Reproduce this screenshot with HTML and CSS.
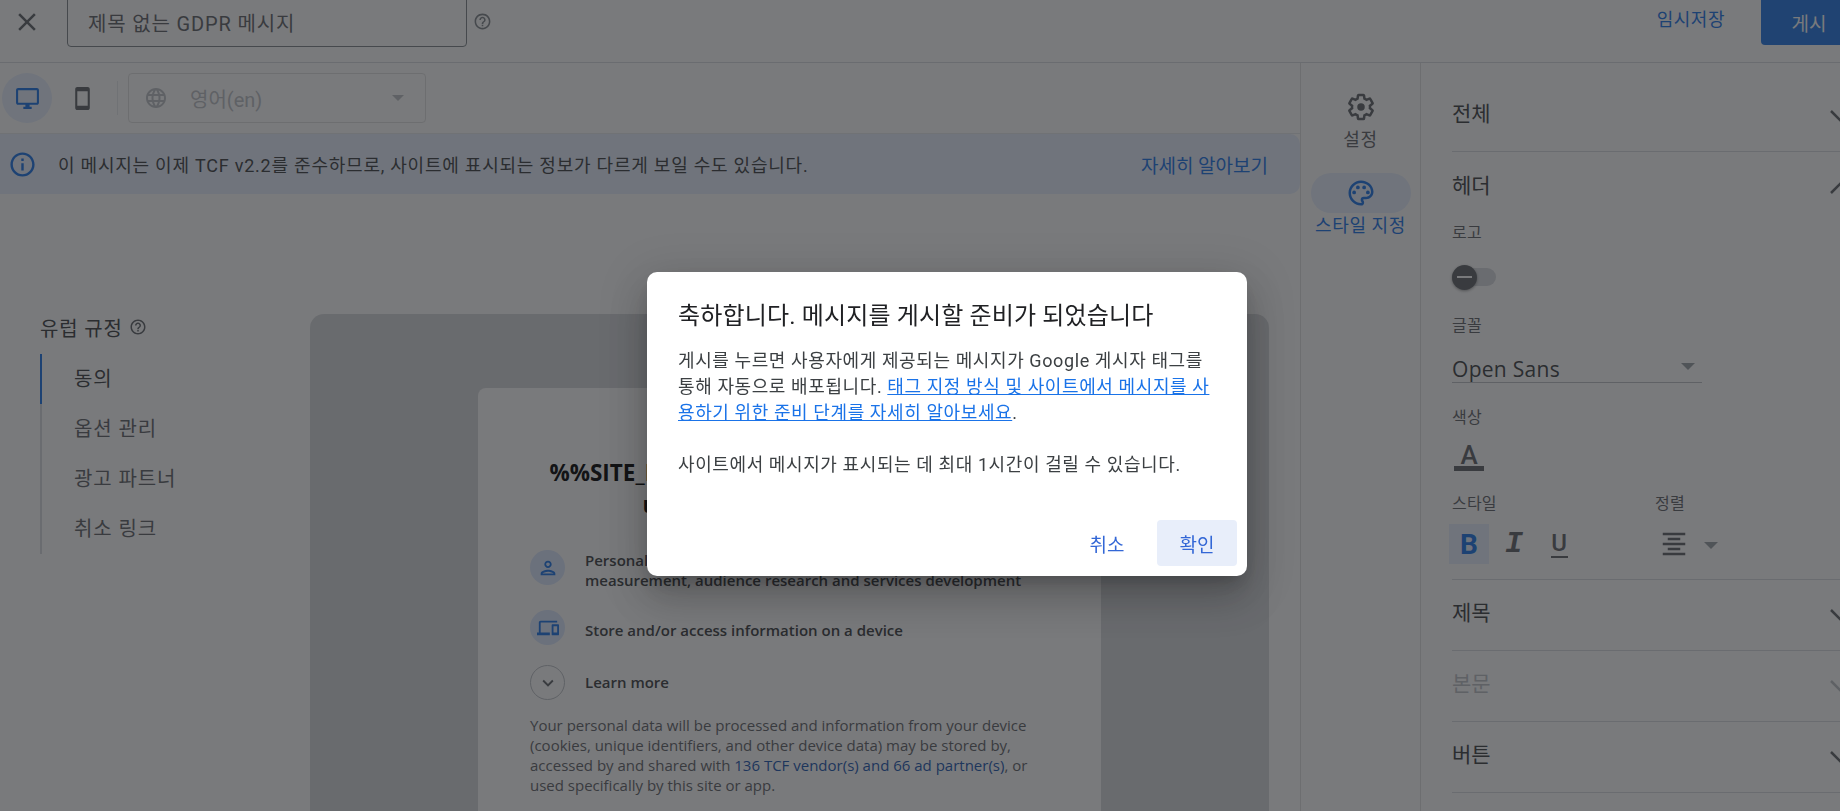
FILE: index.html
```html
<!DOCTYPE html>
<html lang="ko">
<head>
  <meta charset="UTF-8">
  <title>제목 없는 GDPR 메시지</title>
  <link rel="stylesheet" href="styles.css">
</head>
<body>
  <header class="barra">
    <svg class="ico-cerrar" viewBox="0 0 24 24"><path d="M19 6.41L17.59 5 12 10.59 6.41 5 5 6.41 10.59 12 5 17.59 6.41 19 12 13.41 17.59 19 19 17.59 13.41 12z"/></svg>
    <div class="titulo-input">제목 없는 GDPR 메시지</div>
    <svg class="ico-ayuda" viewBox="0 0 24 24"><path d="M11 18h2v-2h-2v2zm1-16C6.48 2 2 6.48 2 12s4.48 10 10 10 10-4.48 10-10S17.52 2 12 2zm0 18c-4.41 0-8-3.59-8-8s3.59-8 8-8 8 3.59 8 8-3.59 8-8 8zm0-14c-2.21 0-4 1.79-4 4h2c0-1.1.9-2 2-2s2 .9 2 2c0 2-3 1.75-3 5h2c0-2.25 3-2.5 3-5 0-2.21-1.79-4-4-4z"/></svg>
    <span class="espacio"></span>
    <a class="borrador">임시저장</a>
    <button class="publicar">게시</button>
  </header>

  <div class="cuerpo">
    <main class="editor">
      <div class="herramientas">
        <span class="disp activo">
          <svg viewBox="0 0 24 24"><path d="M21 2H3c-1.1 0-2 .9-2 2v12c0 1.1.9 2 2 2h7v2H8v2h8v-2h-2v-2h7c1.1 0 2-.9 2-2V4c0-1.1-.9-2-2-2zm0 14H3V4h18v12z"/></svg>
        </span>
        <span class="disp">
          <svg viewBox="0 0 24 24"><path d="M17 1.01L7 1c-1.1 0-2 .9-2 2v18c0 1.1.9 2 2 2h10c1.1 0 2-.9 2-2V3c0-1.1-.9-1.99-2-1.99zM17 19H7V5h10v14z"/></svg>
        </span>
        <span class="separador"></span>
        <div class="idioma">
          <svg class="ico-globo" viewBox="0 0 24 24"><path d="M11.99 2C6.47 2 2 6.48 2 12s4.47 10 9.99 10C17.52 22 22 17.52 22 12S17.52 2 11.99 2zm6.93 6h-2.95c-.32-1.25-.78-2.45-1.38-3.56 1.84.63 3.37 1.91 4.33 3.56zM12 4.04c.83 1.2 1.48 2.53 1.91 3.96h-3.82c.43-1.43 1.08-2.76 1.91-3.96zM4.26 14C4.1 13.36 4 12.69 4 12s.1-1.36.26-2h3.38c-.08.66-.14 1.32-.14 2 0 .68.06 1.34.14 2H4.26zm.82 2h2.95c.32 1.25.78 2.45 1.38 3.56-1.84-.63-3.37-1.9-4.33-3.56zm2.95-8H5.08c.96-1.66 2.49-2.93 4.33-3.56C8.81 5.55 8.35 6.75 8.03 8zM12 19.96c-.83-1.2-1.48-2.53-1.91-3.96h3.82c-.43 1.43-1.08 2.76-1.91 3.96zM14.34 14H9.66c-.09-.66-.16-1.32-.16-2 0-.68.07-1.35.16-2h4.68c.09.65.16 1.32.16 2 0 .68-.07 1.34-.16 2zm.25 5.56c.6-1.11 1.06-2.31 1.38-3.56h2.95c-.96 1.65-2.49 2.93-4.33 3.56zM16.36 14c.08-.66.14-1.32.14-2 0-.68-.06-1.34-.14-2h3.38c.16.64.26 1.31.26 2s-.1 1.36-.26 2h-3.38z"/></svg>
          <span class="idioma-texto">영어(en)</span>
          <span class="flecha flecha-idioma"></span>
        </div>
      </div>

      <div class="aviso">
        <svg class="ico-info" viewBox="0 0 24 24"><path d="M11 7h2v2h-2zm0 4h2v6h-2zm1-9C6.48 2 2 6.48 2 12s4.48 10 10 10 10-4.48 10-10S17.52 2 12 2zm0 18c-4.41 0-8-3.59-8-8s3.59-8 8-8 8 3.59 8 8-3.59 8-8 8z"/></svg>
        <span class="aviso-texto">이 메시지는 이제 TCF v2.2를 준수하므로, 사이트에 표시되는 정보가 다르게 보일 수도 있습니다.</span>
        <a class="aviso-link">자세히 알아보기</a>
      </div>

      <div class="contenido">
        <nav class="lateral">
          <div class="lateral-titulo">유럽 규정
            <svg viewBox="0 0 24 24"><path d="M11 18h2v-2h-2v2zm1-16C6.48 2 2 6.48 2 12s4.48 10 10 10 10-4.48 10-10S17.52 2 12 2zm0 18c-4.41 0-8-3.59-8-8s3.59-8 8-8 8 3.59 8 8-3.59 8-8 8zm0-14c-2.21 0-4 1.79-4 4h2c0-1.1.9-2 2-2s2 .9 2 2c0 2-3 1.75-3 5h2c0-2.25 3-2.5 3-5 0-2.21-1.79-4-4-4z"/></svg>
          </div>
          <ul class="pasos">
            <li class="actual">동의</li>
            <li>옵션 관리</li>
            <li>광고 파트너</li>
            <li>취소 링크</li>
          </ul>
        </nav>

        <section class="vista">
          <div class="tarjeta">
            <h1>%%SITE_NAME%% asks for your consent to<br>use your personal data to:</h1>
            <div class="fila fila-doble">
              <span class="burbuja">
                <svg viewBox="0 0 24 24"><path d="M12 6c1.1 0 2 .9 2 2s-.9 2-2 2-2-.9-2-2 .9-2 2-2m0 10c2.7 0 5.8 1.29 6 2H6c.23-.72 3.31-2 6-2m0-12C9.79 4 8 5.79 8 8s1.79 4 4 4 4-1.79 4-4-1.79-4-4-4zm0 10c-2.67 0-8 1.34-8 4v2h16v-2c0-2.66-5.33-4-8-4z"/></svg>
              </span>
              <p>Personalised advertising and content, advertising and content measurement, audience research and services development</p>
            </div>
            <div class="fila fila-baja">
              <span class="burbuja">
                <svg viewBox="0 0 24 24"><path d="M4 6h18V4H4c-1.1 0-2 .9-2 2v11H0v3h14v-3H4V6zm19 2h-6c-.55 0-1 .45-1 1v10c0 .55.45 1 1 1h6c.55 0 1-.45 1-1V9c0-.55-.45-1-1-1zm-1 9h-4v-7h4v7z"/></svg>
              </span>
              <p>Store and/or access information on a device</p>
            </div>
            <div class="fila fila-centro">
              <span class="burbuja burbuja-linea">
                <svg viewBox="0 0 24 24"><path d="M7.41 8.59L12 13.17l4.59-4.58L18 10l-6 6-6-6z"/></svg>
              </span>
              <p>Learn more</p>
            </div>
            <p class="legal">Your personal data will be processed and information from your device (cookies, unique identifiers, and other device data) may be stored by, accessed by and shared with <a>136 TCF vendor(s) and 66 ad partner(s)</a>, or used specifically by this site or app.</p>
          </div>
        </section>
      </div>
    </main>

    <aside class="riel">
      <div class="riel-item">
        <span class="riel-ico">
          <svg viewBox="0 0 24 24"><path class="engranaje" d="M19.14 12.94c.04-.3.06-.61.06-.94 0-.32-.02-.64-.07-.94l2.03-1.58c.18-.14.23-.41.12-.61l-1.92-3.32c-.12-.22-.37-.29-.59-.22l-2.39.96c-.5-.38-1.03-.7-1.62-.94l-.36-2.54c-.04-.24-.24-.41-.48-.41h-3.84c-.24 0-.43.17-.47.41l-.36 2.54c-.59.24-1.13.57-1.62.94l-2.39-.96c-.22-.08-.47 0-.59.22L2.74 8.87c-.12.21-.08.47.12.61l2.03 1.58c-.05.3-.09.63-.09.94s.02.64.07.94l-2.03 1.58c-.18.14-.23.41-.12.61l1.92 3.32c.12.22.37.29.59.22l2.39-.96c.5.38 1.03.7 1.62.94l.36 2.54c.05.24.24.41.48.41h3.84c.24 0 .44-.17.47-.41l.36-2.54c.59-.24 1.13-.56 1.62-.94l2.39.96c.22.08.47 0 .59-.22l1.92-3.32c.12-.22.07-.47-.12-.61l-2.01-1.58z"/><circle cx="12" cy="12" r="3"/></svg>
        </span>
        <span>설정</span>
      </div>
      <div class="riel-item riel-activo">
        <span class="riel-ico">
          <svg viewBox="0 0 24 24"><path d="M12 22C6.49 22 2 17.51 2 12S6.49 2 12 2s10 4.04 10 9c0 3.31-2.69 6-6 6h-1.77c-.28 0-.5.22-.5.5 0 .12.05.23.13.33.41.47.64 1.06.64 1.67A2.5 2.5 0 0 1 12 22zm0-18c-4.41 0-8 3.59-8 8s3.59 8 8 8c.28 0 .5-.22.5-.5a.54.54 0 0 0-.14-.35c-.41-.46-.63-1.05-.63-1.65a2.5 2.5 0 0 1 2.5-2.5H16c2.21 0 4-1.79 4-4 0-3.86-3.59-7-8-7z"/><circle cx="6.5" cy="11.5" r="1.5"/><circle cx="9.5" cy="7.5" r="1.5"/><circle cx="14.5" cy="7.5" r="1.5"/><circle cx="17.5" cy="11.5" r="1.5"/></svg>
        </span>
        <span>스타일 지정</span>
      </div>
    </aside>

    <aside class="panel">
      <div class="seccion seccion-primera"><span>전체</span><svg class="chevron" viewBox="0 0 24 24"><path d="M2 7l10 10L22 7"/></svg></div>

      <div class="bloque">
        <div class="seccion seccion-abierta"><span>헤더</span><svg class="chevron" viewBox="0 0 24 24"><path d="M2 17L12 7l10 10"/></svg></div>
        <div class="etiqueta">로고</div>
        <div class="interruptor"><span class="pulgar"></span></div>
        <div class="etiqueta etiqueta-fuente">글꼴</div>
        <div class="fuente"><span>Open Sans</span><span class="flecha flecha-fuente"></span></div>
        <div class="etiqueta etiqueta-color">색상</div>
        <div class="color-a">A</div>
        <div class="estilos">
          <div class="col-estilo">
            <div class="etiqueta">스타일</div>
            <div class="botones">
              <span class="btn-b">B</span>
              <span class="btn-i">I</span>
              <span class="btn-u"><span>U</span></span>
            </div>
          </div>
          <div>
            <div class="etiqueta">정렬</div>
            <div class="botones alinear">
              <svg viewBox="0 0 24 24"><path d="M7 15v2h10v-2H7zm-4 6h18v-2H3v2zm0-8h18v-2H3v2zm4-6v2h10V7H7zM3 3v2h18V3H3z"/></svg>
              <span class="flecha"></span>
            </div>
          </div>
        </div>
      </div>

      <div class="seccion seccion-linea"><span>제목</span><svg class="chevron" viewBox="0 0 24 24"><path d="M2 7l10 10L22 7"/></svg></div>
      <div class="seccion seccion-linea apagada"><span>본문</span><svg class="chevron" viewBox="0 0 24 24"><path d="M2 7l10 10L22 7"/></svg></div>
      <div class="seccion seccion-linea"><span>버튼</span><svg class="chevron" viewBox="0 0 24 24"><path d="M2 7l10 10L22 7"/></svg></div>
    </aside>
  </div>

  <div class="velo"></div>

  <div class="dialogo">
    <h2>축하합니다. 메시지를 게시할 준비가 되었습니다</h2>
    <p>게시를 누르면 사용자에게 제공되는 메시지가 Google 게시자 태그를 통해 자동으로 배포됩니다. <a>태그 지정 방식 및 사이트에서 메시지를 사용하기 위한 준비 단계를 자세히 알아보세요</a>.</p>
    <p class="dialogo-nota">사이트에서 메시지가 표시되는 데 최대 1시간이 걸릴 수 있습니다.</p>
    <div class="acciones">
      <button class="btn-cancelar">취소</button>
      <button class="btn-ok">확인</button>
    </div>
  </div>
</body>
</html>
```

FILE: styles.css
```css
html, body {
  height: 100%;
  margin: 0;
}
body {
  overflow: hidden;
  background-color: #fff;
  color: #202124;
  font-family: Roboto, "Noto Sans CJK KR", sans-serif;
}
svg {
  display: block;
  fill: currentColor;
}
.barra {
  display: flex;
  align-items: flex-start;
  height: 62px;
  border-bottom: 1px solid #dadce0;
}
.ico-cerrar {
  width: 30px;
  height: 30px;
  margin: 7px 0 0 12px;
  color: #5f6368;
}
.titulo-input {
  box-sizing: border-box;
  width: 400px;
  height: 57px;
  margin: -10px 0 0 25px;
  padding: 20px 0 0 20px;
  border: 1px solid #80868b;
  border-radius: 4px;
  font-size: 20px;
  letter-spacing: 0.85px;
  line-height: 26px;
  color: #5f6368;
}
.ico-ayuda {
  width: 19px;
  height: 19px;
  margin: 12px 0 0 6px;
  color: #80868b;
}
.espacio {
  flex: 1;
}
.borrador {
  margin: 8px 36px 0 0;
  font-size: 18px;
  letter-spacing: 0.5px;
  line-height: 24px;
  color: #1a73e8;
}
.publicar {
  width: 96px;
  height: 56px;
  margin: -11px -17px 0 0;
  padding: 11px 0 0;
  border: none;
  border-radius: 4px;
  background-color: #2277e6;
  color: #fff;
  font: 19px Roboto, "Noto Sans CJK KR", sans-serif;
}
.cuerpo {
  display: flex;
  height: 748px;
  overflow: hidden;
}
.editor {
  width: 1300px;
  flex: none;
}
.herramientas {
  display: flex;
  align-items: center;
  height: 70px;
  padding-left: 2px;
  border-bottom: 1px solid #e8eaed;
}
.disp {
  display: flex;
  align-items: center;
  justify-content: center;
  width: 50px;
  height: 50px;
  margin-right: 5px;
  border-radius: 50%;
  color: #5f6368;
}
.disp svg {
  width: 25px;
  height: 25px;
}
.disp.activo {
  background-color: #e8f0fe;
  color: #1a73e8;
}
.separador {
  width: 1px;
  height: 34px;
  margin: 0 10px 0 5px;
  background-color: #e8eaed;
}
.idioma {
  display: flex;
  align-items: center;
  box-sizing: border-box;
  width: 298px;
  height: 50px;
  padding-left: 15px;
  border: 1px solid #e0e0e0;
  border-radius: 4px;
  color: #bdc1c6;
}
.ico-globo {
  width: 24px;
  height: 24px;
}
.idioma-texto {
  margin-left: 22px;
  font-size: 20px;
  color: #bdc1c6;
}
.flecha {
  width: 0;
  height: 0;
  border-left: 6px solid transparent;
  border-right: 6px solid transparent;
  border-top: 6px solid #9aa0a6;
}
.flecha-idioma {
  margin-left: auto;
  margin-right: 21px;
  border-top-color: #bdc1c6;
}
.aviso {
  display: flex;
  align-items: center;
  height: 60px;
  padding: 0 32px 0 8px;
  background-color: #e8f0fe;
  border-radius: 0 10px 10px 0;
}
.ico-info {
  width: 29px;
  height: 29px;
  color: #1a73e8;
}
.aviso-texto {
  margin-left: 21px;
  font-size: 18px;
  letter-spacing: 0.77px;
  color: #3c4043;
}
.aviso-link {
  margin-left: auto;
  font-size: 19px;
  color: #1a73e8;
}
.contenido {
  display: flex;
  padding: 120px 0 0 40px;
}
.lateral {
  width: 270px;
  flex: none;
}
.lateral-titulo {
  display: flex;
  align-items: center;
  gap: 6px;
  height: 26px;
  font-size: 20px;
  letter-spacing: 0.85px;
  color: #3c4043;
}
.lateral-titulo svg {
  width: 18px;
  height: 18px;
  color: #5f6368;
}
.pasos {
  margin: 14px 0 0;
  padding: 0;
  list-style: none;
  border-left: 2px solid #dadce0;
}
.pasos li {
  height: 50px;
  margin-left: -2px;
  padding-left: 32px;
  border-left: 2px solid transparent;
  font-size: 20px;
  letter-spacing: 0.9px;
  line-height: 50px;
  color: #5f6368;
}
.pasos li.actual {
  border-left-color: #1a73e8;
  color: #3c4043;
}
.vista {
  box-sizing: border-box;
  width: 959px;
  height: 497px;
  padding-top: 74px;
  overflow: hidden;
  border-radius: 14px 14px 0 0;
  background-color: #d8dadd;
}
.tarjeta {
  box-sizing: border-box;
  width: 623px;
  height: 423px;
  margin: 0 auto;
  padding: 69px 52px 0;
  border-radius: 8px 8px 0 0;
  background-color: #fff;
  font-family: "Open Sans", sans-serif;
}
.tarjeta h1 {
  margin: 0 0 29px;
  font-size: 22.5px;
  line-height: 32px;
  font-weight: 700;
  text-align: center;
  color: #000;
}
.fila {
  display: flex;
  margin-bottom: 20px;
}
.fila p {
  margin: 0 0 0 20px;
  font-size: 15px;
  line-height: 20px;
  font-weight: 600;
  color: #3c4043;
}
.fila-doble {
  height: 40px;
}
.fila-baja p {
  padding-top: 10px;
}
.fila-centro {
  align-items: center;
  margin-bottom: 15px;
}
.fila-centro p {
  margin-bottom: 2px;
}
.burbuja {
  display: flex;
  align-items: center;
  justify-content: center;
  box-sizing: border-box;
  width: 35px;
  height: 35px;
  flex: none;
  border-radius: 50%;
  background-color: #dbe8ff;
  color: #1a73e8;
}
.burbuja svg {
  width: 22px;
  height: 22px;
}
.burbuja-linea {
  background-color: transparent;
  border: 1px solid #bdc1c6;
  color: #5f6368;
}
.legal {
  margin: 0;
  font-size: 15px;
  line-height: 20px;
  color: #5f6368;
}
.legal a {
  color: #1a56b0;
}
.riel {
  box-sizing: border-box;
  width: 121px;
  flex: none;
  padding-top: 24px;
  border-left: 1px solid #e0e0e0;
  border-right: 1px solid #e0e0e0;
  text-align: center;
  color: #5f6368;
}
.riel-item {
  display: flex;
  flex-direction: column;
  align-items: center;
  margin-bottom: 21px;
  font-size: 18px;
  letter-spacing: 0.6px;
  line-height: 24px;
}
.riel-ico {
  display: flex;
  align-items: center;
  justify-content: center;
  width: 100px;
  height: 40px;
  margin-bottom: 1px;
  border-radius: 20px;
}
.riel-ico svg {
  width: 30px;
  height: 30px;
}
.engranaje {
  fill: none;
  stroke: currentColor;
  stroke-width: 2;
}
.riel-activo {
  color: #1a73e8;
}
.riel-activo .riel-ico {
  background-color: #e8f0fe;
}
.panel {
  flex: none;
  box-sizing: border-box;
  width: 432px;
  padding-left: 31px;
}
.seccion {
  display: flex;
  align-items: flex-start;
  justify-content: space-between;
  box-sizing: border-box;
  height: 71px;
  padding-top: 19px;
  font-size: 21px;
  line-height: 28px;
  color: #3c4043;
  border-bottom: 1px solid #dadce0;
}
.seccion-primera {
  margin-top: 18px;
}
.seccion-abierta {
  height: 67px;
  padding-top: 20px;
  border-bottom: none;
}
.chevron {
  width: 24px;
  height: 24px;
  margin-top: 4px;
  flex: none;
  fill: none;
  stroke: currentColor;
  stroke-width: 2.5;
  color: #5f6368;
}
.apagada, .apagada .chevron {
  color: #bdc1c6;
}
.bloque {
  padding-bottom: 15px;
  border-bottom: 1px solid #dadce0;
}
.etiqueta {
  height: 28px;
  font-size: 16px;
  letter-spacing: 0.2px;
  line-height: 28px;
  color: #5f6368;
}
.interruptor {
  position: relative;
  width: 44px;
  height: 18px;
  margin: 21px 0 26px;
  border-radius: 9px;
  background-color: #dadce0;
}
.pulgar {
  position: absolute;
  top: -3.5px;
  left: 0;
  width: 25px;
  height: 25px;
  border-radius: 50%;
  background-color: #5f6368;
  box-shadow: 0 1px 3px rgba(0,0,0,0.4);
}
.pulgar::after {
  content: "";
  position: absolute;
  top: 11px;
  left: 5px;
  width: 15px;
  height: 2px;
  background-color: #fff;
}
.fuente {
  display: flex;
  align-items: center;
  justify-content: space-between;
  box-sizing: border-box;
  width: 250px;
  height: 43px;
  padding: 16px 7px 0 0;
  border-bottom: 1px solid #bdc1c6;
  font-family: "Open Sans", sans-serif;
  font-size: 21px;
  letter-spacing: 0.3px;
  color: #3c4043;
}
.flecha-fuente {
  margin-top: -6px;
  border-left-width: 7px;
  border-right-width: 7px;
  border-top-width: 7px;
}
.etiqueta-color {
  margin-top: 21px;
}
.color-a {
  box-sizing: border-box;
  width: 30px;
  height: 27px;
  margin: 12px 0 19px 2px;
  border-bottom: 5px solid #5f6368;
  font-size: 26px;
  font-weight: 500;
  line-height: 22px;
  text-align: center;
  color: #5f6368;
}
.estilos {
  display: flex;
}
.col-estilo {
  width: 203px;
}
.botones {
  display: flex;
  align-items: center;
  height: 40px;
  margin-top: 6px;
  color: #5f6368;
}
.btn-b, .btn-i, .btn-u {
  display: flex;
  align-items: center;
  justify-content: center;
  width: 40px;
  height: 40px;
  font-size: 28px;
}
.btn-b {
  margin-left: -3px;
  background-color: #e8f0fe;
  color: #1a73e8;
  font-weight: 700;
}
.btn-i {
  width: 50px;
  font-family: "Liberation Mono", monospace;
  font-size: 30px;
  font-weight: 700;
  font-style: italic;
}
.btn-u span {
  display: block;
  width: 17px;
  border-bottom: 2px solid #5f6368;
  font-size: 24px;
  line-height: 25px;
  font-weight: 500;
  text-align: center;
}
.alinear svg {
  width: 30px;
  height: 30px;
  margin-left: 4px;
}
.alinear .flecha {
  margin: 3px 0 0 15px;
  border-left-width: 7px;
  border-right-width: 7px;
  border-top-width: 7px;
}
.velo {
  position: fixed;
  top: 0;
  left: 0;
  width: 100%;
  height: 100%;
  background-color: rgba(32, 33, 36, 0.6);
}
.dialogo {
  position: fixed;
  top: 272px;
  left: 647px;
  box-sizing: border-box;
  width: 600px;
  height: 304px;
  padding: 29px 31px 0;
  border-radius: 10px;
  background-color: #fff;
  box-shadow: 0 11px 15px -7px rgba(0,0,0,0.2), 0 24px 38px 3px rgba(0,0,0,0.14), 0 9px 46px 8px rgba(0,0,0,0.12);
}
.dialogo h2 {
  margin: 0 0 17px;
  font-size: 24px;
  letter-spacing: 0.15px;
  line-height: 30px;
  font-weight: 400;
  color: #202124;
}
.dialogo p {
  margin: 0;
  font-size: 18px;
  letter-spacing: 0.6px;
  line-height: 26px;
  color: #3c4043;
}
.dialogo a {
  color: #1a73e8;
  text-decoration: underline;
}
.dialogo .dialogo-nota {
  margin-top: 26px;
}
.acciones {
  position: absolute;
  right: 10px;
  bottom: 10px;
  display: flex;
  align-items: center;
  gap: 10px;
}
.acciones button {
  width: 80px;
  height: 46px;
  border: none;
  border-radius: 4px;
  background: none;
  color: #3367d6;
  font: 19px Roboto, "Noto Sans CJK KR", sans-serif;
}
.acciones .btn-ok {
  background-color: #e8eefa;
}
```
